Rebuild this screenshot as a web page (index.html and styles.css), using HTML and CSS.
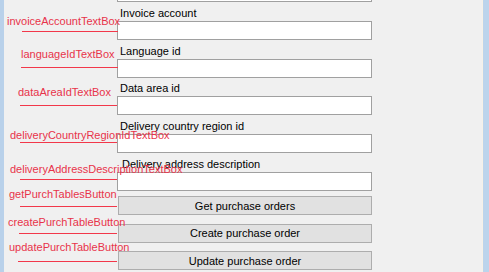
FILE: index.html
```html
<!DOCTYPE html>
<html lang="en">
<head>
    <meta charset="UTF-8">
    <title>Purchase order form</title>
    <link rel="stylesheet" href="styles.css">
</head>
<body>

    <div class="window">
        <div class="edge-left"></div>

        <div class="client">
            <form class="form">
                <div class="stub"></div>

                <div class="field">
                    <label for="invoiceAccount">Invoice account</label>
                    <input type="text" id="invoiceAccount">
                </div>
                <div class="field">
                    <label for="languageId">Language id</label>
                    <input type="text" id="languageId">
                </div>
                <div class="field">
                    <label for="dataAreaId" class="short">Data area id</label>
                    <input type="text" id="dataAreaId">
                </div>
                <div class="field">
                    <label for="deliveryCountryRegionId">Delivery country region id</label>
                    <input type="text" id="deliveryCountryRegionId">
                </div>
                <div class="field">
                    <label for="deliveryAddressDescription" class="indent">Delivery address description</label>
                    <input type="text" id="deliveryAddressDescription">
                </div>

                <div class="buttons">
                    <button type="button">Get purchase orders</button>
                    <button type="button">Create purchase order</button>
                    <button type="button">Update purchase order</button>
                </div>
            </form>

            <!-- control name callouts drawn over the form -->
            <div class="notes">
                <span class="note n-invoice">invoiceAccountTextBox</span>
                <span class="rule r-invoice"></span>
                <span class="note n-language">languageIdTextBox</span>
                <span class="rule r-language"></span>
                <span class="note n-dataarea">dataAreaIdTextBox</span>
                <span class="rule r-dataarea"></span>
                <span class="note n-country">deliveryCountryRegionIdTextBox</span>
                <span class="rule r-country"></span>
                <span class="note n-address">deliveryAddressDescriptionTextBox</span>
                <span class="rule r-address"></span>
                <span class="note n-get">getPurchTablesButton</span>
                <span class="rule r-get"></span>
                <span class="note n-create">createPurchTableButton</span>
                <span class="rule r-create"></span>
                <span class="note n-update">updatePurchTableButton</span>
                <span class="rule r-update"></span>
                <span class="note n-delete">deletePurchTableButton</span>
            </div>
        </div>

        <div class="edge-right"></div>
    </div>

</body>
</html>
```

FILE: styles.css
```css
body {
    margin: 0;
    padding: 0;
    font-family: "Liberation Sans", Arial, sans-serif;
    font-size: 11px;
    color: #000;
    background-color: #f0f0f0;
    overflow: hidden;
}
.window {
    display: flex;
    width: 489px;
    height: 272px;
    overflow: hidden;
}
.edge-left {
    width: 4px;
    background-color: #b9d1ea;
}
.edge-right {
    width: 6px;
    background-color: #bcd4ec;
    border-left: 1px solid #f6f1e7;
}
.client {
    position: relative;
    flex: 1;
    padding-left: 113px;
    background-color: #f0f0f0;
}
.form {
    display: flex;
    flex-direction: column;
    width: 255px;
}
.stub {
    height: 2px;
    background-color: #fff;
    border: 1px solid #a0a0a0;
    border-top: none;
    box-sizing: border-box;
}
.field {
    display: flex;
    flex-direction: column;
}
.field label {
    display: flex;
    align-items: flex-end;
    height: 19px;
    padding-left: 3px;
    padding-bottom: 1px;
    line-height: 13px;
    box-sizing: border-box;
}
.field label.short {
    height: 18px;
}
.field label.indent {
    padding-left: 5px;
}
.field input {
    height: 19px;
    margin: 0;
    padding: 0 2px;
    font: inherit;
    background-color: #fff;
    border: 1px solid #a0a0a0;
    box-sizing: border-box;
}
.buttons {
    display: flex;
    flex-direction: column;
    gap: 8.5px;
    margin-top: 5px;
    margin-left: 1px;
}
.buttons button {
    height: 19px;
    width: 254px;
    margin: 0;
    padding: 0;
    font: inherit;
    color: #000;
    background-color: #e1e1e1;
    border: 1px solid #adadad;
}
.notes {
    position: absolute;
    top: 0;
    left: -4px;
    right: 0;
    bottom: 0;
    pointer-events: none;
}
.note {
    position: absolute;
    font-size: 11px;
    line-height: 11px;
    color: #e8334a;
    white-space: nowrap;
}
.rule {
    position: absolute;
    height: 1px;
    background-color: #f2384a;
}
.n-invoice { left: 7px; top: 16px; }
.r-invoice { left: 22px; width: 96px; top: 31px; }
.n-language { left: 21px; top: 49px; }
.r-language { left: 21px; width: 97px; top: 67px; }
.n-dataarea { left: 18px; top: 87px; }
.r-dataarea { left: 20px; width: 97px; top: 105px; }
.n-country { left: 10px; top: 130px; }
.r-country { left: 20px; width: 97px; top: 142px; }
.n-address { left: 10px; top: 164px; }
.r-address { left: 20px; width: 97px; top: 179px; }
.n-get { left: 9px; top: 189px; }
.r-get { left: 20px; width: 97px; top: 206px; }
.n-create { left: 8px; top: 217px; }
.r-create { left: 19px; width: 98px; top: 233px; }
.n-update { left: 9px; top: 242px; }
.r-update { left: 18px; width: 99px; top: 261px; }
.n-delete { left: 9px; top: 271px; }
```
